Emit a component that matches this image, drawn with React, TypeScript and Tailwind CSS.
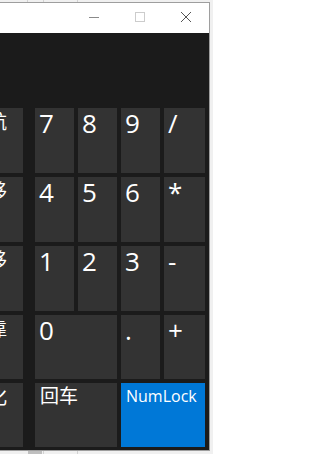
import * as React from "react";
import clsx from "clsx";
import { twMerge } from "tailwind-merge";

// labels on the nav column are clipped by the left edge of the window
const NAV_KEYS = ["导航", "上移", "下移", "停靠", "淡化"];

const CJK = "font-['Noto_Sans_CJK_SC',sans-serif]";

interface KeyProps {
  label: string;
  className?: string;
  labelClassName?: string;
}

function Key({ label, className, labelClassName }: KeyProps) {
  return (
    <div className={twMerge("bg-[#333333] text-white", className)}>
      <span className={clsx("block whitespace-nowrap leading-none", labelClassName)}>
        {label}
      </span>
    </div>
  );
}

// digits and operators share one look
const digit = "pl-[4px] pt-[2px] text-[26px]";

function TitleBar() {
  return (
    <div className="flex h-[30px] shrink-0 justify-end bg-white">
      {/* minimise */}
      <div className="flex w-[46px] items-center justify-center pb-[1px]">
        <svg width="10" height="10" viewBox="0 0 10 10">
          <line x1="0" y1="4.5" x2="10" y2="4.5" stroke="#8a8a8a" strokeWidth="1" />
        </svg>
      </div>
      {/* maximise (disabled) */}
      <div className="flex w-[46px] items-center justify-center pb-[2px]">
        <svg width="10" height="10" viewBox="0 0 10 10">
          <rect x="0.5" y="0.5" width="9" height="9" fill="none" stroke="#cccccc" strokeWidth="1" />
        </svg>
      </div>
      {/* close */}
      <div className="flex w-[46px] items-center justify-center pb-[2px]">
        <svg width="10" height="10" viewBox="0 0 10 10">
          <path d="M0 0 L10 10 M10 0 L0 10" stroke="#555555" strokeWidth="1" fill="none" />
        </svg>
      </div>
    </div>
  );
}

export default function App() {
  return (
    <div className="flex h-[454px] w-[213px] flex-col overflow-hidden bg-[#f0f0f0] font-['Open_Sans','Noto_Sans_CJK_SC',sans-serif]">
      {/* whatever sits behind the window */}
      <div className="flex h-[2px] shrink-0">
        <div className="w-[27px]" />
        <div className="w-px bg-[#d2d2d2]" />
        <div className="w-[15px]" />
        <div className="w-px bg-[#d2d2d2]" />
        <div className="w-[33px]" />
        <div className="w-px bg-[#d2d2d2]" />
      </div>

      <div className="flex h-[449px] w-[210px] shrink-0 flex-col border-y border-r border-[#9e9e9e]">
        <TitleBar />

        <div className="flex flex-1 gap-[12px] bg-[#1b1b1b] pb-[3px] pt-[75px]">
          {/* nav column, mostly off screen */}
          <div className="ml-[-36px] grid w-[59px] shrink-0 grid-rows-[65px_65px_65px_64px_64px] gap-[4px]">
            {NAV_KEYS.map((k) => (
              <Key key={k} label={k} labelClassName={clsx(CJK, "pl-[5px] pt-[3px] text-[19px]")} />
            ))}
          </div>

          {/* numpad */}
          <div className="grid grid-cols-[39px_39px_39px_41px] grid-rows-[65px_65px_65px_64px_64px] gap-[4px]">
            <Key label="7" labelClassName={digit} />
            <Key label="8" labelClassName={digit} />
            <Key label="9" labelClassName={digit} />
            <Key label="/" labelClassName={digit} />

            <Key label="4" labelClassName={digit} />
            <Key label="5" labelClassName={digit} />
            <Key label="6" labelClassName={digit} />
            <Key label="*" labelClassName={digit} />

            <Key label="1" labelClassName={digit} />
            <Key label="2" labelClassName={digit} />
            <Key label="3" labelClassName={digit} />
            <Key label="-" labelClassName={digit} />

            <Key label="0" className="col-span-2" labelClassName={digit} />
            <Key label="." labelClassName={digit} />
            <Key label="+" labelClassName={digit} />

            <Key label="回车" className="col-span-2" labelClassName={clsx(CJK, "pl-[5px] pt-[2px] text-[19px]")} />
            <Key label="NumLock" className="col-span-2 bg-[#0078d7]" labelClassName="pl-[5px] pt-[5px] text-[16px]" />
          </div>
        </div>
      </div>

      <div className="flex h-[3px] shrink-0">
        <div className="w-[28px]" />
        <div className="w-[14px] bg-[#bfbfbf]" />
        <div className="w-px" />
        <div className="w-px bg-[#d2d2d2]" />
        <div className="w-[33px]" />
        <div className="w-px bg-[#d2d2d2]" />
      </div>
    </div>
  );
}
